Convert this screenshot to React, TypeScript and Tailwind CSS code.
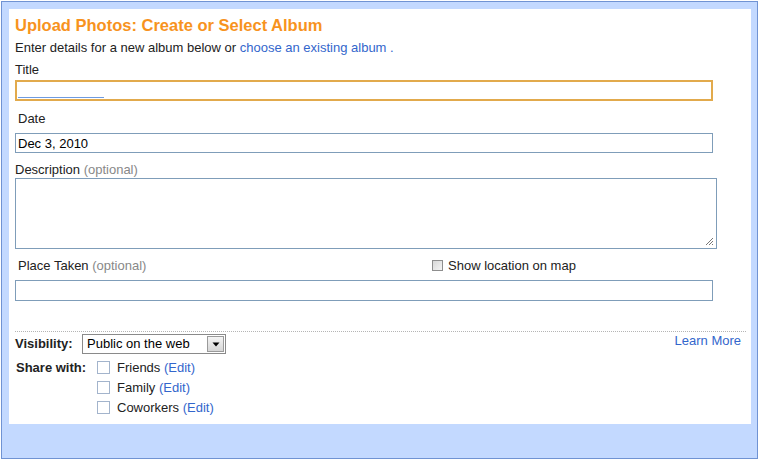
import React from 'react'

const Label = ({ text, optional, className = '' }: { text: string; optional?: boolean; className?: string }) => (
  <div className={`text-[13px] leading-[16px] text-[#222] ${className}`}>
    {text}
    {optional && <span className="text-[#888]"> (optional)</span>}
  </div>
)

const ShareRow = ({ name }: { name: string }) => (
  <div className="flex items-center h-[20px]">
    <span className="w-[13px] h-[13px] border border-[#a3b4cc] bg-white mr-[7px] mt-[-1px]" />
    <span className="text-[13px] leading-[16px] text-[#222]">
      {name} <span className="text-[#3366cc]">(Edit)</span>
    </span>
  </div>
)

const App = () => {
  return (
    <div className="w-[759px] h-[459px] bg-white pt-px pl-px font-['Liberation_Sans',Arial,sans-serif]">
      <div className="w-[757px] h-[458px] border border-[#7093d3] bg-[#c3d9ff] pt-[7px] pl-[7px]">
        <div className="w-[742px] h-[415px] bg-white pl-[6px] pt-[6px]">
          <div className="text-[16.5px] leading-[20px] font-bold text-[#f7931e]">Upload Photos: Create or Select Album</div>
          <div className="mt-[5px] text-[13px] leading-[16px] text-[#222]">
            Enter details for a new album below or <span className="text-[#3366cc]">choose an existing album</span>{' '}
            <span className="text-[#3366cc]">.</span>
          </div>

          <Label text="Title" className="mt-[6px]" />
          <div className="mt-[2px] w-[698px] h-[21px] border-2 border-[#e2aa4c] bg-white flex items-end pl-[1px] pb-[1px]">
            <div className="w-[86px] h-px bg-[#6f9be0]" />
          </div>

          <Label text="Date" className="mt-[10px] ml-[3px]" />
          <div className="mt-[6px] w-[698px] h-[20px] border border-[#7f9db9] bg-white pl-[2px] pt-px text-[13px] leading-[18px] text-black">
            Dec 3, 2010
          </div>

          <Label text="Description" optional className="mt-[9px]" />
          <div className="w-[702px] h-[71px] border border-[#7f9db9] bg-white flex items-end justify-end p-[2px]">
            <svg width="10" height="10" viewBox="0 0 10 10">
              <path d="M9 2 L2 9 M9 5 L5 9 M9 8 L8 9" stroke="#777" strokeWidth="1" />
            </svg>
          </div>

          <div className="mt-[9px] flex items-start">
            <Label text="Place Taken" optional className="ml-[3px] w-[414px]" />
            <div className="flex items-center">
              <span className="w-[11px] h-[11px] border border-[#8e8e8e] bg-gradient-to-br from-[#d8d8d8] to-[#f4f4f4] mr-[5px] mt-[-2px]" />
              <span className="text-[13px] leading-[16px] text-[#222]">Show location on map</span>
            </div>
          </div>
          <div className="mt-[6px] w-[698px] h-[21px] border border-[#7f9db9] bg-white" />

          <div className="mt-[30px] w-[731px] border-t border-dotted border-[#b5b5b5]" />

          <div className="mt-[2px] w-[726px] flex items-start">
            <div className="h-[20px] flex items-center">
              <span className="text-[13px] leading-[16px] font-bold text-[#222] w-[67px]">Visibility:</span>
              <div className="w-[144px] h-[20px] border border-[#8a8a8a] bg-white flex items-center">
                <span className="flex-1 pl-[4px] text-[13px] leading-[16px] text-black">Public on the web</span>
                <span className="w-[17px] h-[16px] mr-px border border-[#9a9a9a] bg-gradient-to-b from-[#f4f4f4] to-[#d6d6d6] flex items-center justify-center">
                  <svg width="8" height="5" viewBox="0 0 8 5">
                    <path d="M0.5 0.5 L7.5 0.5 L4 4.5 Z" fill="#000" />
                  </svg>
                </span>
              </div>
            </div>
            <span className="ml-auto text-[13px] leading-[16px] text-[#3366cc] mt-[-1px]">Learn More</span>
          </div>

          <div className="mt-[4px] flex items-start">
            <div className="w-[82px] pl-px h-[20px] flex items-center text-[13px] leading-[16px] font-bold text-[#222]">Share with:</div>
            <div className="flex flex-col">
              <ShareRow name="Friends" />
              <ShareRow name="Family" />
              <ShareRow name="Coworkers" />
            </div>
          </div>
        </div>
      </div>
    </div>
  )
}

export default App
